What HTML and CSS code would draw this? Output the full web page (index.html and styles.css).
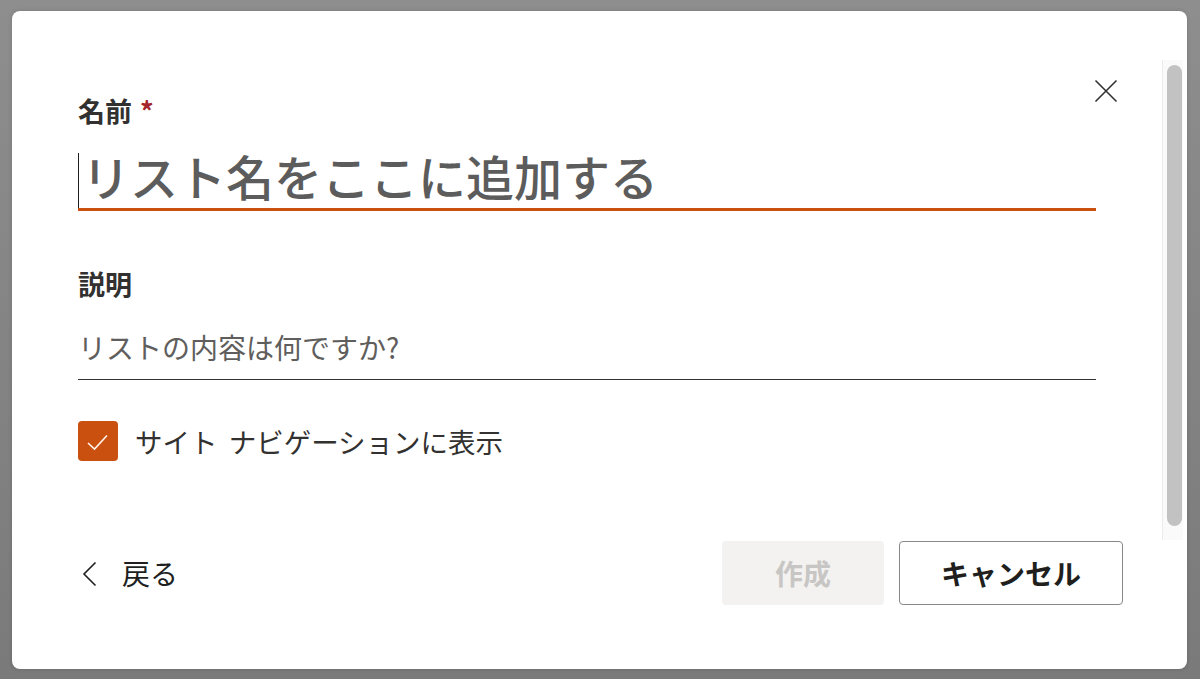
FILE: index.html
```html
<!DOCTYPE html>
<html lang="ja">
<head>
<meta charset="utf-8">
<title>リストを作成</title>
<link rel="stylesheet" href="styles.css">
</head>
<body>
<div class="overlay">
  <div class="dialog">
    <button class="close" aria-label="閉じる">
      <svg width="24" height="24" viewBox="0 0 24 24"><path d="M1.5 1.5 L22.5 22.5 M22.5 1.5 L1.5 22.5" stroke="#323130" stroke-width="1.6" fill="none"/></svg>
    </button>
    <div class="scroll">
      <div class="content">
        <div class="label">名前<span class="req">*</span></div>
        <div class="name-field">
          <span class="caret"></span><span class="name-ph">リスト名をここに追加する</span>
        </div>
        <div class="label label-desc">説明</div>
        <div class="desc-field">リストの内容は何ですか?</div>
        <label class="check-row">
          <span class="checkbox">
            <svg width="40" height="40" viewBox="0 0 40 40"><path d="M10 22 L16.5 28 L29 14.5" stroke="#fff3ec" stroke-width="1.6" fill="none"/></svg>
          </span>
          <span class="check-label">サイト ナビゲーションに表示</span>
        </label>
      </div>
      <div class="scrollbar"><div class="thumb"></div></div>
    </div>
    <div class="footer">
      <button class="back">
        <svg width="16" height="26" viewBox="0 0 16 26"><path d="M13.5 1.5 L2 13 L13.5 24.5" stroke="#201f1e" stroke-width="1.6" fill="none"/></svg>
        <span>戻る</span>
      </button>
      <div class="actions">
        <button class="btn btn-create" disabled>作成</button>
        <button class="btn btn-cancel">キャンセル</button>
      </div>
    </div>
  </div>
</div>
</body>
</html>
```

FILE: styles.css
```css
* { box-sizing: border-box; }
html, body { margin: 0; padding: 0; }
body {
  font-family: "Noto Sans CJK JP", "Noto Sans", sans-serif;
  color: #323130;
}
.overlay {
  width: 1200px;
  height: 679px;
  padding: 11px 13px 10px 12px;
  background: linear-gradient(#8e8e8e, #7a7a7a);
}
.dialog {
  position: relative;
  height: 100%;
  background: #fff;
  border-radius: 8px;
  display: flex;
  flex-direction: column;
  box-shadow: 0 0 4px rgba(0,0,0,0.15);
}
.close {
  position: absolute;
  top: 68px;
  left: 1082px;
  width: 24px;
  height: 24px;
  padding: 0;
  border: 0;
  background: none;
  display: flex;
}
.scroll {
  margin-top: 49px;
  height: 480px;
  display: flex;
}
.content {
  flex: 1;
  padding: 33px 66px 0 66px;
}
.label {
  font-size: 27px;
  line-height: 36px;
  font-weight: 700;
  color: #323130;
}
.req {
  color: #a4262c;
  margin-left: 8px;
}
.name-field {
  margin-top: 22px;
  height: 60px;
  border-bottom: 3px solid #ca5010;
  display: flex;
  align-items: center;
}
.caret {
  width: 1px;
  height: 55px;
  background: #201f1e;
  margin-right: 3px;
  margin-top: 1px;
}
.name-ph {
  font-size: 48px;
  font-weight: 500;
  color: #5c5c5c;
  line-height: 56px;
  margin-top: -10px;
}
.label-desc {
  margin-top: 55px;
}
.desc-field {
  margin-top: 18px;
  height: 60px;
  border-bottom: 1px solid #323130;
  font-size: 28px;
  line-height: 54px;
  color: #605e5c;
}
.check-row {
  margin-top: 41px;
  display: flex;
  align-items: center;
  gap: 17px;
}
.checkbox {
  width: 40px;
  height: 40px;
  background: #ca5010;
  border-radius: 4px;
  display: flex;
}
.check-label {
  font-size: 27.5px;
  line-height: 40px;
  color: #323130;
  word-spacing: 5px;
}
.scrollbar {
  width: 21px;
  margin-right: 4px;
  border-left: 1px solid #ececec;
  background: #fafafa;
  padding: 5px 0 14px 4px;
}
.thumb {
  width: 15px;
  height: 100%;
  background: #c2c2c2;
  border-radius: 8px;
}
.footer {
  margin-top: 1px;
  display: flex;
  align-items: flex-start;
  justify-content: space-between;
  padding: 0 64px 0 70px;
}
.back {
  display: flex;
  align-items: center;
  gap: 24px;
  height: 64px;
  padding: 0;
  border: 0;
  background: none;
  font-family: inherit;
  font-size: 28px;
  color: #201f1e;
}
.back svg { margin-top: 2px; }
.actions {
  display: flex;
  gap: 15px;
}
.btn {
  height: 64px;
  border-radius: 4px;
  font-family: inherit;
  font-size: 28px;
  font-weight: 700;
  padding: 0;
}
.btn-create {
  width: 162px;
  background: #f3f2f1;
  border: 0;
  color: #c8c6c4;
}
.btn-cancel {
  width: 224px;
  background: #fff;
  border: 1px solid #8a8886;
  color: #201f1e;
}
```
